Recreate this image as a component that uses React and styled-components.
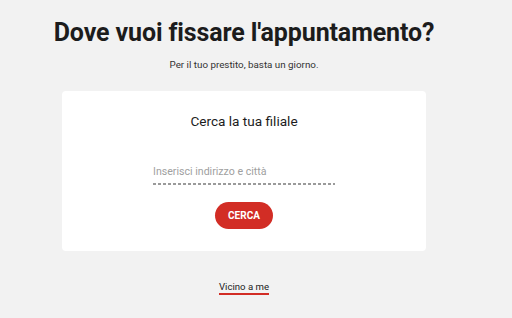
import React from 'react';
import styled, { createGlobalStyle } from 'styled-components';

const GlobalStyle = createGlobalStyle`
  body {
    margin: 0;
    background: #f2f2f2;
    font-family: Roboto, 'Liberation Sans', sans-serif;
    color: #1c1c1c;
  }
`;

const Page = styled.div`
  display: flex;
  flex-direction: column;
  align-items: center;
  padding: 18px 24px 0 0;
`;

const Title = styled.h1`
  margin: 0;
  font-size: 25px;
  font-weight: 700;
  line-height: 30px;
  letter-spacing: -0.12px;
`;

const Subtitle = styled.p`
  margin: 10px 0 0;
  font-size: 9.8px;
  line-height: 14px;
  color: #333;
`;

const Card = styled.div`
  box-sizing: border-box;
  width: 364px;
  height: 160px;
  margin-top: 19px;
  background: #fff;
  border-radius: 4px;
  display: flex;
  flex-direction: column;
  align-items: center;
  padding-top: 21px;
`;

const CardTitle = styled.h2`
  margin: 0;
  font-size: 13.6px;
  font-weight: 400;
  line-height: 18px;
`;

const Field = styled.div`
  width: 182px;
  margin-top: 35px;
  padding-bottom: 6px;
  background-image: repeating-linear-gradient(to right, #9a9a9a 0 3px, transparent 3px 5px);
  background-size: 100% 2px;
  background-repeat: no-repeat;
  background-position: bottom left;
`;

const Input = styled.input`
  display: block;
  width: 100%;
  border: 0;
  padding: 0;
  outline: none;
  background: transparent;
  font-family: inherit;
  font-size: 10.6px;
  line-height: 14px;
  color: #333;
  &::placeholder {
    color: #a0a0a0;
  }
`;

const Button = styled.button`
  margin-top: 17px;
  width: 58px;
  height: 27px;
  border: 0;
  border-radius: 14px;
  background: #d22d25;
  color: #fff;
  font-family: inherit;
  font-size: 10px;
  font-weight: 700;
  cursor: pointer;
`;

const NearLink = styled.a`
  margin-top: 30px;
  font-size: 9.6px;
  line-height: 12px;
  color: #1c1c1c;
  text-decoration: none;
  border-bottom: 2px solid #d22d25;
  padding-bottom: 0;
`;

export default function App() {
  return (
    <>
      <GlobalStyle />
      <Page>
        <Title>Dove vuoi fissare l'appuntamento?</Title>
        <Subtitle>Per il tuo prestito, basta un giorno.</Subtitle>
        <Card>
          <CardTitle>Cerca la tua filiale</CardTitle>
          <Field>
            <Input placeholder="Inserisci indirizzo e città" />
          </Field>
          <Button>CERCA</Button>
        </Card>
        <NearLink href="#">Vicino a me</NearLink>
      </Page>
    </>
  );
}
